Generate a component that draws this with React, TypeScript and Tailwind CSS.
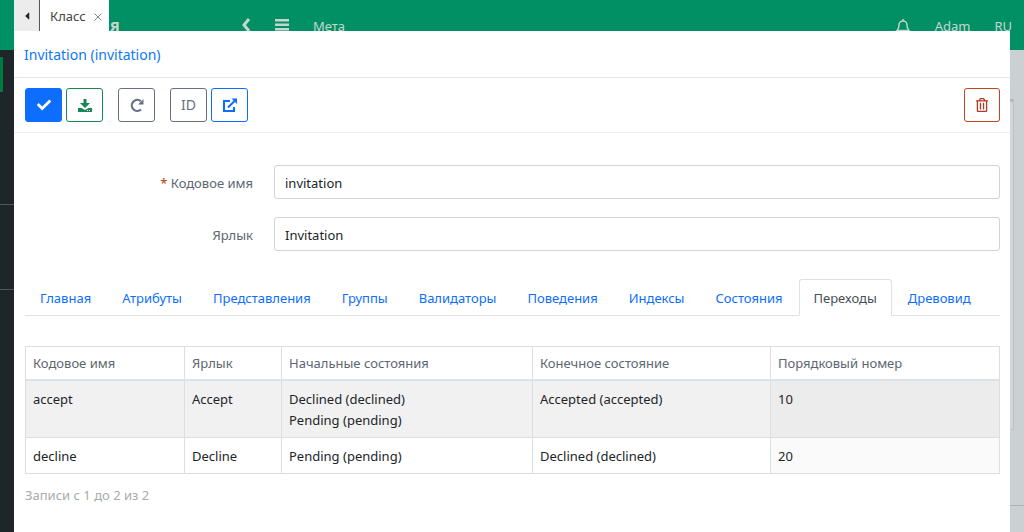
import { useState } from "react";
import type { ReactNode } from "react";
import { FaCaretLeft, FaCheck, FaRegTrashAlt } from "react-icons/fa";

const TABS = ["Главная", "Атрибуты", "Представления", "Группы", "Валидаторы", "Поведения", "Индексы", "Состояния", "Переходы", "Древовид"];

const COLUMNS = [
    { label: "Кодовое имя", width: "w-[159px]" },
    { label: "Ярлык", width: "w-[97px]" },
    { label: "Начальные состояния", width: "w-[251px]" },
    { label: "Конечное состояние", width: "w-[238px]" },
    { label: "Порядковый номер", width: "" },
];

const TRANSITIONS = [
    { name: "accept", label: "Accept", startStates: ["Declined (declined)", "Pending (pending)"], finishState: "Accepted (accepted)", order: 10 },
    { name: "decline", label: "Decline", startStates: ["Pending (pending)"], finishState: "Declined (declined)", order: 20 },
];

function ToolButton({ title, className, children }: { title: string; className: string; children: ReactNode }) {
    return (
        <button type="button" title={title} className={`flex h-[34px] items-center justify-center rounded-[3px] border ${className}`}>
            {children}
        </button>
    );
}

function SaveIcon() {
    return (
        <svg viewBox="0 0 16 16" className="size-4" fill="currentColor">
            <path d="M6.500 2h3v4H13l-5 5-5-5h3.500z" />
            <path d="M1 11h3.500L8 13l3.500-2H15v4H1zM10 13v1h1v-1zM12 13v1h1v-1z" fillRule="evenodd" />
        </svg>
    );
}

function ReloadIcon() {
    return (
        <svg viewBox="0 0 16 16" className="size-4" fill="none" stroke="currentColor" strokeWidth="2.200">
            <path d="M12 12.500A5.500 5.500 0 1 1 11.800 4.200" />
            <path d="M14.500 2v5.500H9z" fill="currentColor" stroke="none" />
        </svg>
    );
}

function OpenIcon() {
    return (
        <svg viewBox="0 0 16 16" className="size-4" fill="none" stroke="currentColor" strokeWidth="2">
            <path d="M8 4H2v10h10v-4M6 10.500L12.500 4" />
            <path d="M9.500 1.500H15V7z" fill="currentColor" stroke="none" />
        </svg>
    );
}

function BellIcon() {
    return (
        <svg viewBox="0 0 16 16" className="size-4" fill="none" stroke="currentColor" strokeWidth="1.500">
            <path d="M2 12.500c2-2 2-3 2-5.500a4 4 0 0 1 8 0c0 2.500 0 3.500 2 5.500zM8 3V1M6.500 14.500h3" />
        </svg>
    );
}

function Backdrop() {
    return (
        <div className="flex min-h-screen flex-col bg-[#cbd0d3]">
            <header className="flex h-[50px] items-center bg-[#009063] pl-[110px] text-[#c5d5d0]">
                <span className="w-[131px] text-base font-bold">я</span>
                <svg viewBox="0 0 10 14" className="h-[14px] w-[10px]" fill="none" stroke="currentColor" strokeWidth="3">
                    <path d="M8 1L3 7l5 6" />
                </svg>
                <svg viewBox="0 0 14 12" className="ml-6 h-3 w-[14px]" fill="currentColor">
                    <path d="M0 0h14v2.500H0zM0 4.500h14v2.500H0zM0 9h14v2.500H0z" />
                </svg>
                <span className="ml-6 pt-0.5">Мета</span>
                <div className="ml-auto flex items-center gap-6 pr-3 pt-0.5">
                    <BellIcon />
                    <span>Adam</span>
                    <span>RU</span>
                </div>
            </header>
            <div className="flex grow">
                <aside className="w-[180px] bg-[#1f2629] pt-[7px]">
                    <div className="h-[35px] w-[3px] bg-[#007a43]" />
                    <div className="mt-28 border-t border-[#50585e]" />
                    <div className="mt-21 border-t border-[#50585e]" />
                </aside>
                <main className="flex grow flex-col pt-[49px]">
                    <div className="mr-[10px] h-[331px] border-t-3 border-r border-b border-t-[#b0b8bb] border-r-[#bcc1c4] border-b-[#bcc1c4] bg-[#d2d5d7]" />
                    <div className="mt-[75px] border-t border-[#aeb2b4]" />
                </main>
            </div>
        </div>
    );
}

export default function App() {
    const [activeTab, setActiveTab] = useState("Переходы");
    const [name, setName] = useState("invitation");
    const [label, setLabel] = useState("Invitation");

    return (
        <div className="relative min-h-screen overflow-hidden font-['Noto_Sans',sans-serif] text-[13px] leading-[21px] text-[#212529]">
            <Backdrop />

            <div className="absolute inset-y-0 right-[14px] left-[14px] flex flex-col">
                <div className="flex h-[31px] shrink-0">
                    <button type="button" title="Назад" className="flex w-[26px] items-center justify-center border-r border-[#50585e] bg-[#ececec] text-[#212529]">
                        <FaCaretLeft className="size-3" />
                    </button>
                    <div className="flex w-[69px] items-center gap-2 bg-white pt-0.5 pl-[10px] text-[#444]">
                        <span>Класс</span>
                        <button type="button" title="Закрыть" className="text-[#888]">
                            <svg viewBox="0 0 8 8" className="size-2" fill="none" stroke="currentColor">
                                <path d="M.5.5l7 7M7.500.5l-7 7" />
                            </svg>
                        </button>
                    </div>
                </div>

                <div className="grow bg-white">
                    <div className="flex h-[47px] items-center border-b border-[#e5e6e7] px-[10px] pt-0.5">
                        <a href="#" className="text-sm text-[#0d78f2]">Invitation (invitation)</a>
                    </div>

                    <div className="flex h-[55px] items-center border-b border-[#eeeff0] pr-[10px] pl-[11px]">
                        <div className="flex gap-1">
                            <ToolButton title="Сохранить и закрыть" className="w-[37px] border-[#0d6efd] bg-[#0d6efd] text-white">
                                <FaCheck className="size-[14px]" />
                            </ToolButton>
                            <ToolButton title="Сохранить" className="w-[37px] border-[#198754] text-[#198754]">
                                <SaveIcon />
                            </ToolButton>
                        </div>
                        <div className="ml-[15px]">
                            <ToolButton title="Обновить" className="w-[37px] border-[#667085] text-[#667085]">
                                <ReloadIcon />
                            </ToolButton>
                        </div>
                        <div className="ml-[15px] flex gap-1">
                            <ToolButton title="Идентификатор" className="w-[37px] border-[#667085] text-sm text-[#667085]">ID</ToolButton>
                            <ToolButton title="Открыть" className="w-[37px] border-[#0d6efd] text-[#0d6efd]">
                                <OpenIcon />
                            </ToolButton>
                        </div>
                        <div className="ml-auto">
                            <ToolButton title="Удалить" className="w-9 border-[#bf4420] text-[#b03a20]">
                                <FaRegTrashAlt className="size-[14px]" />
                            </ToolButton>
                        </div>
                    </div>

                    <form className="flex flex-col gap-[18px] pt-8 pr-[10px] pl-[11px]">
                        <div className="flex items-center">
                            <label htmlFor="name" className="mr-[21px] w-[228px] pt-0.5 text-right text-[#5c6670]">
                                <span className="text-[#b03a10]">*</span> Кодовое имя
                            </label>
                            <input
                                id="name"
                                value={name}
                                onChange={(event) => setName(event.target.value)}
                                className="h-[34px] min-w-0 grow rounded-[3px] border border-[#ced4da] px-[10px] pt-0.5 text-[#212529]"
                            />
                        </div>
                        <div className="flex items-center">
                            <label htmlFor="label" className="mr-[21px] w-[228px] pt-0.5 text-right text-[#5c6670]">Ярлык</label>
                            <input
                                id="label"
                                value={label}
                                onChange={(event) => setLabel(event.target.value)}
                                className="h-[34px] min-w-0 grow rounded-[3px] border border-[#ced4da] px-[10px] pt-0.5 text-[#212529]"
                            />
                        </div>
                    </form>

                    <nav className="mt-7 mr-[10px] ml-[11px] flex h-[37px] gap-px border-b border-[#dee2e6]">
                        {TABS.map((tab) => (
                            <button
                                key={tab}
                                type="button"
                                onClick={() => setActiveTab(tab)}
                                className={
                                    tab === activeTab
                                        ? "-mb-px rounded-t-[3px] border border-[#dee2e6] border-b-white bg-white px-[14px] pt-0.5 text-[#495057]"
                                        : "border border-transparent px-[14px] pt-0.5 text-[#0d6efd]"
                                }
                            >
                                {tab}
                            </button>
                        ))}
                    </nav>

                    <div className="pt-[30px] pr-[10px] pl-[11px]">
                        <table className="w-full table-fixed border-collapse border border-[#dcdee0]">
                            <thead>
                                <tr className="h-[33px] border-b-2 border-[#dee2e6] text-[#5c6670]">
                                    {COLUMNS.map((column) => (
                                        <th key={column.label} className={`border-r border-[#dcdee0] px-[7px] pt-0.5 text-left font-normal ${column.width}`}>{column.label}</th>
                                    ))}
                                </tr>
                            </thead>
                            <tbody>
                                {TRANSITIONS.map((row) => (
                                    <tr key={row.name} className="border-b border-[#dcdee0] align-top odd:bg-[#f1f1f1]">
                                        <td className="border-r border-[#dcdee0] px-[7px] pt-2 pb-1.5">{row.name}</td>
                                        <td className="border-r border-[#dcdee0] px-[7px] pt-2 pb-1.5">{row.label}</td>
                                        <td className="border-r border-[#dcdee0] px-[7px] pt-2 pb-1.5">
                                            {row.startStates.map((state) => <div key={state}>{state}</div>)}
                                        </td>
                                        <td className="border-r border-[#dcdee0] px-[7px] pt-2 pb-1.5">{row.finishState}</td>
                                        <td className="bg-black/2 px-[7px] pt-2 pb-1.5">{row.order}</td>
                                    </tr>
                                ))}
                            </tbody>
                        </table>
                        <p className="mt-[11px] text-[#a9aca9]">Записи с 1 до 2 из 2</p>
                    </div>
                </div>
            </div>
        </div>
    );
}
